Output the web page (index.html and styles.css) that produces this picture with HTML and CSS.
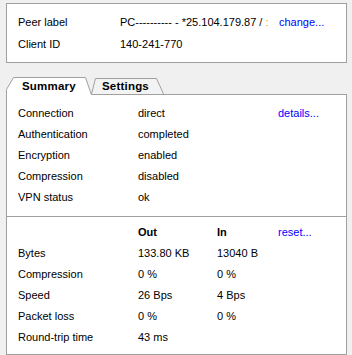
FILE: index.html
```html
<!DOCTYPE html>
<html>
<head>
<meta charset="utf-8">
<link rel="stylesheet" href="styles.css">
</head>
<body>
<div class="peer-box">
  <div class="peer-row">
    <span class="lbl">Peer label</span>
    <span class="val clip">PC---------- - *25.104.179.87 / <span class="frag">:</span></span>
    <a class="link">change...</a>
  </div>
  <div class="peer-row">
    <span class="lbl">Client ID</span>
    <span class="val">140-241-770</span>
    <span></span>
  </div>
</div>

<div class="tabstrip">
  <div class="tab active">
    <svg class="tab-shape" width="86" height="18" viewBox="0 0 86 18"><path d="M0.5,18 V12.5 L7.5,0.5 H79.5 L85.5,18" fill="#ffffff" stroke="#a0a0a0" stroke-width="1"/></svg>
    <span class="tab-label">Summary</span>
  </div>
  <div class="tab second">
    <svg class="tab-shape" width="74" height="18" viewBox="0 0 74 18"><path d="M1.5,17 L5.5,1.5 H66.5 L73.5,17" fill="#f3f3f3" stroke="#a0a0a0" stroke-width="1"/></svg>
    <span class="tab-label">Settings</span>
  </div>
</div>

<div class="panel">
  <div class="section info">
    <span>Connection</span><span>direct</span><a class="link">details...</a>
    <span>Authentication</span><span>completed</span><span></span>
    <span>Encryption</span><span>enabled</span><span></span>
    <span>Compression</span><span>disabled</span><span></span>
    <span>VPN status</span><span>ok</span><span></span>
  </div>
  <div class="section stats">
    <span></span><span class="hd">Out</span><span class="hd">In</span><a class="link">reset...</a>
    <span>Bytes</span><span>133.80 KB</span><span>13040 B</span><span></span>
    <span>Compression</span><span>0 %</span><span>0 %</span><span></span>
    <span>Speed</span><span>26 Bps</span><span>4 Bps</span><span></span>
    <span>Packet loss</span><span>0 %</span><span>0 %</span><span></span>
    <span>Round-trip time</span><span>43 ms</span><span></span><span></span>
  </div>
</div>
</body>
</html>
```

FILE: styles.css
```css
html, body {
  margin: 0;
  padding: 0;
}
body {
  background: #f0f0f0;
  font-family: "Liberation Sans", Arial, sans-serif;
  font-size: 11px;
  color: #000;
  padding: 3px 5px 0 6px;
  width: 341px;
  height: 352px;
  overflow: hidden;
}
.peer-box {
  background: #fff;
  border: 1px solid #a0a0a0;
  height: 58px;
  padding: 7px 0 0 11px;
  box-sizing: content-box;
}
.peer-box {
  height: 51px;
}
.peer-row {
  display: grid;
  grid-template-columns: 102px 159px auto;
  height: 22px;
  line-height: 22px;
  white-space: nowrap;
}
.clip {
  overflow: hidden;
}
.frag {
  color: #e2a93a;
}
.link {
  color: #0000ff;
  cursor: pointer;
}
.tabstrip {
  margin-top: 14px;
  margin-bottom: -1px;
  height: 18px;
  display: flex;
  position: relative;
  z-index: 1;
}
.tab {
  position: relative;
  height: 18px;
}
.tab.active {
  width: 86px;
  z-index: 2;
}
.tab.second {
  width: 74px;
  margin-left: -2px;
  z-index: 1;
}
.tab-shape {
  position: absolute;
  left: 0;
  top: 0;
  overflow: visible;
}
.tab-label {
  position: relative;
  display: block;
  font-weight: bold;
  font-size: 11.5px;
  letter-spacing: 0.2px;
  line-height: 18px;
}
.tab.active .tab-label {
  padding-left: 16px;
}
.tab.second .tab-label {
  padding-left: 12px;
}
.panel {
  background: #fff;
  border: 1px solid #a0a0a0;
}
.section {
  display: grid;
  grid-auto-rows: 21px;
  line-height: 21px;
  padding-left: 11px;
  white-space: nowrap;
}
.info {
  grid-template-columns: 120px 140px auto;
  padding-top: 8px;
  padding-bottom: 8px;
}
.stats {
  grid-template-columns: 120px 79px 61px auto;
  border-top: 1px solid #a0a0a0;
  padding-top: 5px;
  padding-bottom: 6px;
}
.hd {
  font-weight: bold;
}
```
